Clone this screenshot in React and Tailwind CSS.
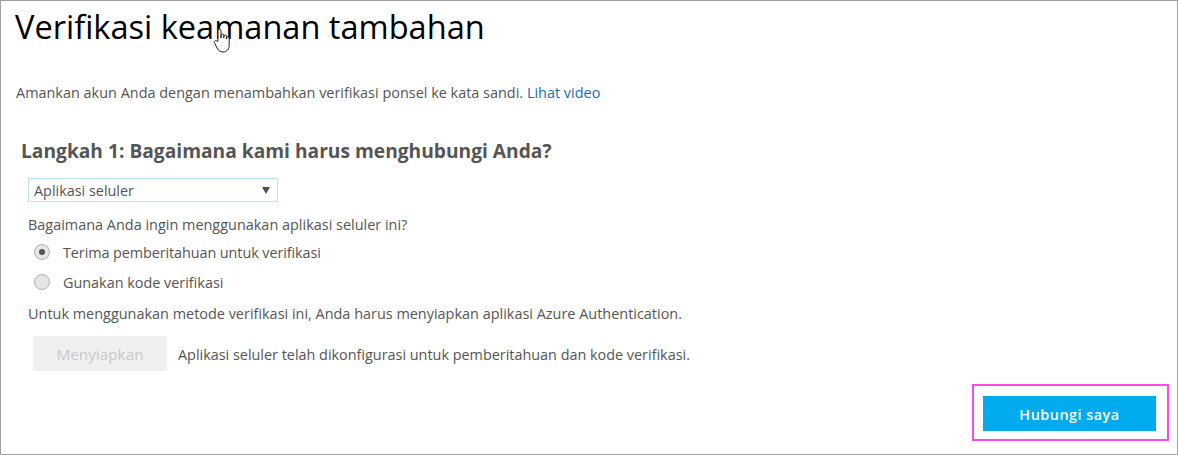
export default function App() {
  return (
    <div className="relative w-[1178px] h-[455px] bg-white border border-[#a0a0a0] font-['Open_Sans',sans-serif] text-[#555555] overflow-hidden">
      <div className="pl-[15px]">
        <h1 className="pt-[5px] -ml-px h-[82px] text-[32.55px] leading-[42px] text-black">Verifikasi keamanan tambahan</h1>
        <p className="h-[20px] text-[14.45px] leading-[20px]">
          Amankan akun Anda dengan menambahkan verifikasi ponsel ke kata sandi.{" "}
          <a className="text-[#1a6bb5]">Lihat video</a>
        </p>
      </div>

      <div className="pl-[20px] pt-[36px]">
        <h2 className="text-[19.2px] leading-[24px] font-bold text-[#555555]">Langkah 1: Bagaimana kami harus menghubungi Anda?</h2>
      </div>

      <div className="pl-[27px] pt-[15px]">
        <div className="flex items-center justify-between w-[250px] h-[24px] border border-[#bfe0f0] pl-[5px] pr-[7px] pt-px text-[14.4px]">
          <span>Aplikasi seluler</span>
          <span className="w-0 h-0 border-x-[4px] border-x-transparent border-t-[7px] border-t-[#505050]"></span>
        </div>
        <p className="mt-[13px] text-[14.45px] leading-[20px]">Bagaimana Anda ingin menggunakan aplikasi seluler ini?</p>
        <div className="mt-[8px] flex flex-col gap-[9px] pl-[6px] text-[14.4px] leading-[20px]">
          <label className="flex items-center gap-[13px]">
            <span className="flex items-center justify-center w-[16px] h-[16px] -mt-[3px] rounded-full border border-[#b0b0b0] bg-[#e6e6e6]">
              <span className="w-[6px] h-[6px] rounded-full bg-[#555555]"></span>
            </span>
            <span className="tracking-[-0.08px]">Terima pemberitahuan untuk verifikasi</span>
          </label>
          <label className="flex items-center gap-[13px]">
            <span className="w-[16px] h-[16px] -mt-[2px] rounded-full border border-[#b0b0b0] bg-[#e6e6e6]"></span>
            <span className="pt-px">Gunakan kode verifikasi</span>
          </label>
        </div>
        <p className="mt-[10px] pt-px text-[14.45px] leading-[20px]">Untuk menggunakan metode verifikasi ini, Anda harus menyiapkan aplikasi Azure Authentication.</p>
        <div className="mt-[12px] flex items-center gap-[11px] pl-[5px]">
          <button className="w-[134px] h-[35px] pt-px bg-[#f0f0f0] text-[#c8c8c8] text-[15.3px]">Menyiapkan</button>
          <span className="pt-[2px] text-[14.4px]">Aplikasi seluler telah dikonfigurasi untuk pemberitahuan dan kode verifikasi.</span>
        </div>
      </div>

      <div className="flex justify-end pr-[21px] pt-[25px]">
        <button className="w-[173px] h-[35px] pt-[3px] bg-[#00abee] text-white text-[14.4px] font-semibold tracking-[0.5px]">Hubungi saya</button>
      </div>

      {/* annotation box */}
      <div className="absolute left-[971px] top-[383px] w-[197px] h-[57px] border-[2px] border-[#f94be8]"></div>

      {/* hand cursor */}
      <svg className="absolute left-[212px] top-[26px]" width="20" height="27" viewBox="0 0 20 27" fill="white" stroke="#222222" strokeWidth="1" strokeLinejoin="round">
        <path d="M5 14V3.500a1.500 1.500 0 0 1 3 0V11V8.500a1.400 1.400 0 0 1 2.800 0V11V9.500a1.400 1.400 0 0 1 2.800 0V12V11a1.300 1.300 0 0 1 2.600 0v7c0 4-2.200 7-6.200 7-3 0-4.500-1.500-6-4L1.500 16c-1-1.800 1.200-3.200 2.400-1.800z" />
      </svg>
    </div>
  );
}
